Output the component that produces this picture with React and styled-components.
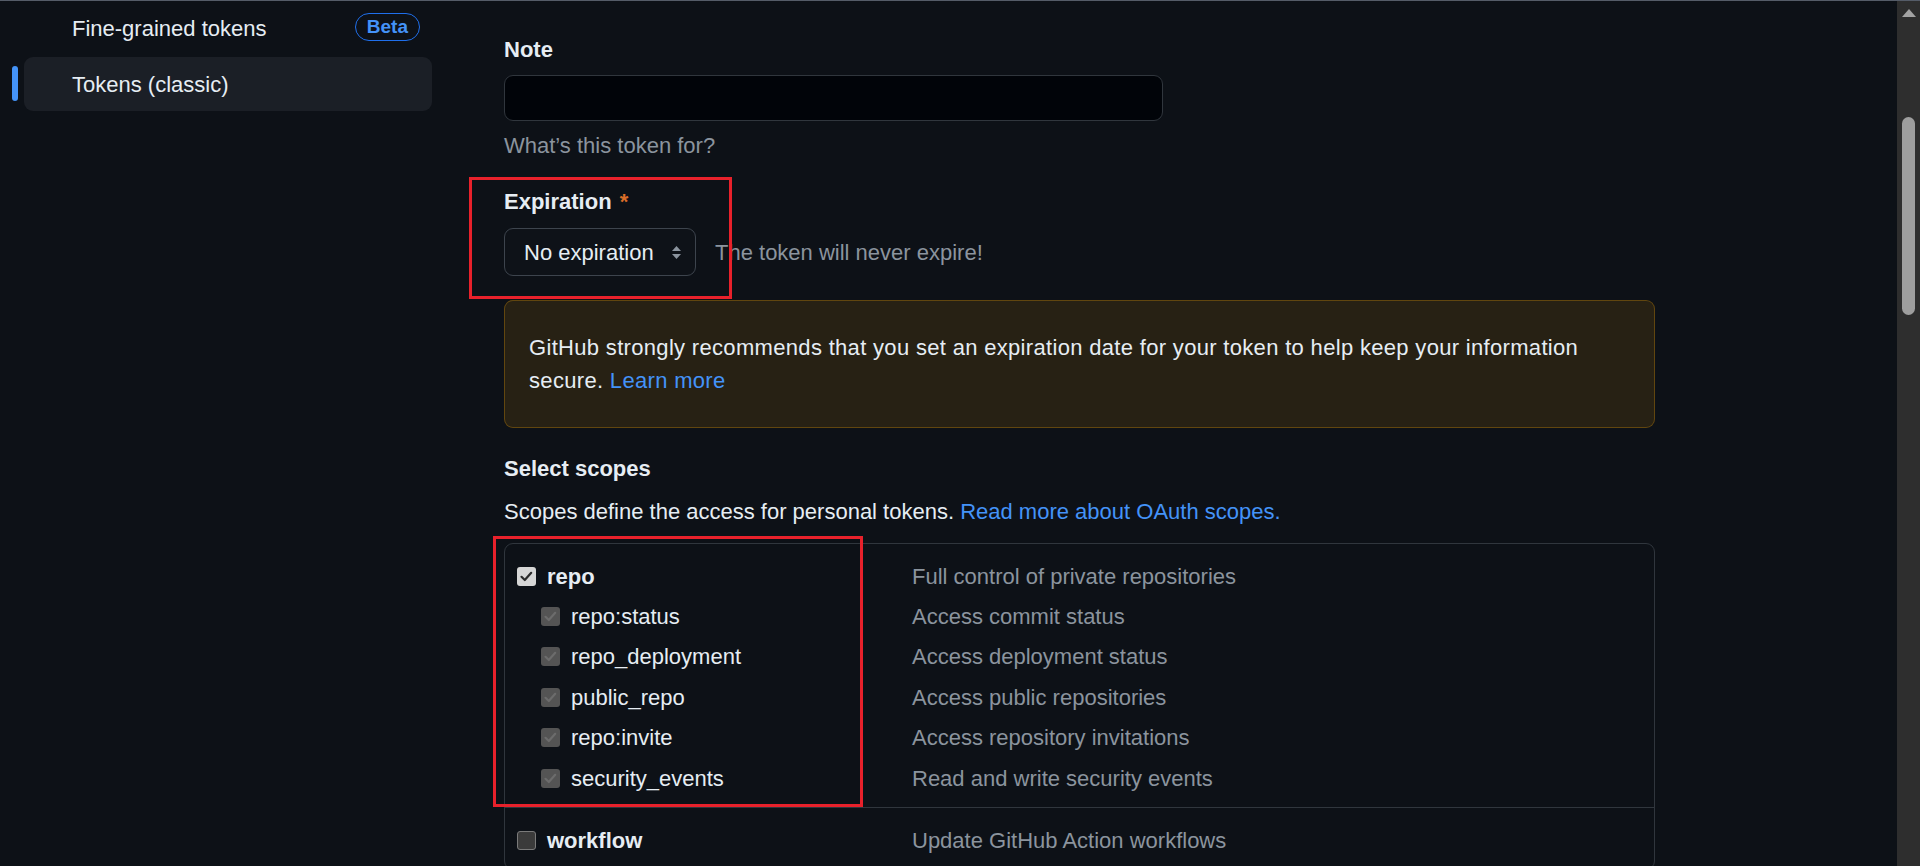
import React from "react";
import styled, { createGlobalStyle } from "styled-components";

const GlobalStyle = createGlobalStyle`
  html, body {
    margin: 0;
    height: 100%;
    overflow: hidden;
    background: #0d1117;
  }
  body {
    font-family: "Liberation Sans", Arial, sans-serif;
    font-size: 22px;
    line-height: 33px;
    color: #e6edf3;
  }
  * { box-sizing: border-box; }
`;

const scopes = [
  {
    name: "repo",
    desc: "Full control of private repositories",
    checked: true,
    children: [
      { name: "repo:status", desc: "Access commit status" },
      { name: "repo_deployment", desc: "Access deployment status" },
      { name: "public_repo", desc: "Access public repositories" },
      { name: "repo:invite", desc: "Access repository invitations" },
      { name: "security_events", desc: "Read and write security events" },
    ],
  },
  { name: "workflow", desc: "Update GitHub Action workflows", children: [] },
];

const CheckMark = ({ color }) => (
  <svg width="19" height="19" viewBox="0 0 19 19">
    <polyline
      points="4.5,9.8 7.8,13 14.2,5.8"
      fill="none"
      stroke={color}
      strokeWidth="2.2"
      strokeLinecap="round"
      strokeLinejoin="round"
    />
  </svg>
);

const SelectArrows = () => (
  <svg width="11" height="15" viewBox="0 0 11 15">
    <path d="M1 6 L5.5 1 L10 6 Z" fill="#8b949e" />
    <path d="M1 9 L5.5 14 L10 9 Z" fill="#8b949e" />
  </svg>
);

const Checkbox = ({ state }) => (
  <Box $state={state}>
    {state === "checked" && <CheckMark color="#2b2b2b" />}
    {state === "disabled" && <CheckMark color="#6c6c6c" />}
  </Box>
);

const ScopeRow = ({ scope, sub, state }) => (
  <Row>
    <NameCell $sub={sub}>
      <Checkbox state={state} />
      <ScopeName $bold={!sub}>{scope.name}</ScopeName>
    </NameCell>
    <Desc>{scope.desc}</Desc>
  </Row>
);

const App = () => {
  return (
    <>
      <GlobalStyle />
      <Window>
        <Page>
          <Sidebar>
            <NavItem>
              Fine-grained tokens
              <Badge>Beta</Badge>
            </NavItem>
            <NavItem $active>
              <ActiveBar />
              Tokens (classic)
            </NavItem>
          </Sidebar>

          <Content>
            <Label $mb={9}>Note</Label>
            <TextInput />
            <Hint>What’s this token for?</Hint>

            <Label $mb={10} $mt={23}>
              Expiration <Required>*</Required>
            </Label>
            <SelectRow>
              <FakeSelect>
                No expiration
                <SelectArrows />
              </FakeSelect>
              <Muted>The token will never expire!</Muted>
            </SelectRow>

            <Flash>
              GitHub strongly recommends that you set an expiration date for your token to help keep your
              information secure. <Link>Learn more</Link>
            </Flash>

            <Label $mb={10} $mt={24}>Select scopes</Label>
            <Text>
              Scopes define the access for personal tokens. <Link>Read more about OAuth scopes.</Link>
            </Text>

            <ScopeTable>
              {scopes.map((scope) => (
                <ScopeGroup key={scope.name}>
                  <ScopeRow scope={scope} state={scope.checked ? "checked" : "empty"} />
                  {scope.children.map((child) => (
                    <ScopeRow
                      key={child.name}
                      scope={child}
                      sub
                      state={scope.checked ? "disabled" : "empty"}
                    />
                  ))}
                </ScopeGroup>
              ))}
            </ScopeTable>
          </Content>
        </Page>

        <Scrollbar>
          <ScrollArrow />
          <Thumb $top={100} $height={198} />
        </Scrollbar>

        <Annotation style={{ left: 469, top: 176, width: 263, height: 122 }} />
        <Annotation style={{ left: 493, top: 535, width: 370, height: 271 }} />
      </Window>
    </>
  );
};

const Window = styled.div`
  position: relative;
  display: flex;
  height: 866px;
  border-top: 1px solid #555c68;
  overflow: hidden;
`;

const Page = styled.div`
  flex: 1;
  display: grid;
  grid-template-columns: 432px 1151px;
  column-gap: 72px;
  align-items: start;
`;

const Sidebar = styled.nav`
  display: flex;
  flex-direction: column;
  gap: 2px;
  padding-left: 24px;
`;

const NavItem = styled.div`
  position: relative;
  display: flex;
  align-items: center;
  justify-content: space-between;
  height: 54px;
  padding: 0 12px 0 48px;
  border-radius: 9px;
  background: ${(p) => (p.$active ? "#1b1f26" : "transparent")};
`;

const ActiveBar = styled.span`
  position: absolute;
  left: -12px;
  top: 9px;
  width: 6px;
  height: 35px;
  border-radius: 3px;
  background: #4493f8;
`;

const Badge = styled.span`
  height: 28px;
  padding: 0 11px;
  margin-top: -3px;
  border: 1px solid #1f6feb;
  border-radius: 14px;
  font-size: 19px;
  font-weight: bold;
  line-height: 26px;
  color: #4493f8;
`;

const Content = styled.main`
  display: flex;
  flex-direction: column;
  align-items: flex-start;
  padding-top: 32px;
`;

const Label = styled.div`
  font-weight: bold;
  margin-top: ${(p) => p.$mt || 0}px;
  margin-bottom: ${(p) => p.$mb || 0}px;
`;

const Required = styled.span`
  color: #db6d28;
  margin-left: 2px;
`;

const TextInput = styled.div`
  width: 659px;
  height: 46px;
  background: #010409;
  border: 1px solid #30363d;
  border-radius: 9px;
`;

const Hint = styled.div`
  margin-top: 8px;
  color: #8b949e;
`;

const SelectRow = styled.div`
  display: flex;
  align-items: center;
  gap: 19px;
`;

const FakeSelect = styled.div`
  display: flex;
  align-items: center;
  justify-content: space-between;
  width: 192px;
  height: 48px;
  padding: 0 13px 0 19px;
  background: #0e1218;
  border: 1px solid #3d444d;
  border-radius: 9px;
`;

const Muted = styled.span`
  color: #8b949e;
`;

const Flash = styled.div`
  width: 100%;
  margin-top: 24px;
  padding: 30px 24px;
  letter-spacing: 0.32px;
  background: rgba(187, 128, 9, 0.15);
  border: 1px solid rgba(187, 128, 9, 0.4);
  border-radius: 9px;
`;

const Link = styled.span`
  color: #4493f8;
`;

const Text = styled.div``;

const ScopeTable = styled.div`
  width: 100%;
  margin-top: 15px;
  border: 1px solid #30363d;
  border-radius: 9px;
`;

const ScopeGroup = styled.div`
  padding: 12px 0 8.6px;
  & + & {
    border-top: 1px solid #30363d;
  }
`;

const Row = styled.div`
  display: grid;
  grid-template-columns: 395px 1fr;
  align-items: center;
  height: 40.4px;
  padding-left: 12px;
`;

const NameCell = styled.div`
  display: flex;
  align-items: center;
  gap: 11px;
  padding-left: ${(p) => (p.$sub ? 24 : 0)}px;
`;

const ScopeName = styled.span`
  font-weight: ${(p) => (p.$bold ? "bold" : "normal")};
`;

const Desc = styled.span`
  color: #8b949e;
`;

const Box = styled.span`
  display: flex;
  width: 19px;
  height: 19px;
  border-radius: 3px;
  background: ${(p) =>
    p.$state === "checked" ? "#d6d6d6" : p.$state === "disabled" ? "#545454" : "#3b3b3b"};
  border: ${(p) => (p.$state === "empty" ? "1.5px solid #7a7a7a" : "none")};
`;

const Scrollbar = styled.div`
  display: flex;
  flex-direction: column;
  align-items: center;
  width: 23px;
  padding-top: 8px;
  background: #2e2e2e;
`;

const ScrollArrow = styled.span`
  width: 0;
  height: 0;
  border-left: 7px solid transparent;
  border-right: 7px solid transparent;
  border-bottom: 8px solid #a3a3a3;
`;

const Thumb = styled.span`
  width: 13px;
  height: ${(p) => p.$height}px;
  margin-top: ${(p) => p.$top}px;
  border-radius: 7px;
  background: #9e9e9e;
`;

const Annotation = styled.div`
  position: absolute;
  border: 3px solid #e8212b;
  pointer-events: none;
`;

export default App;
